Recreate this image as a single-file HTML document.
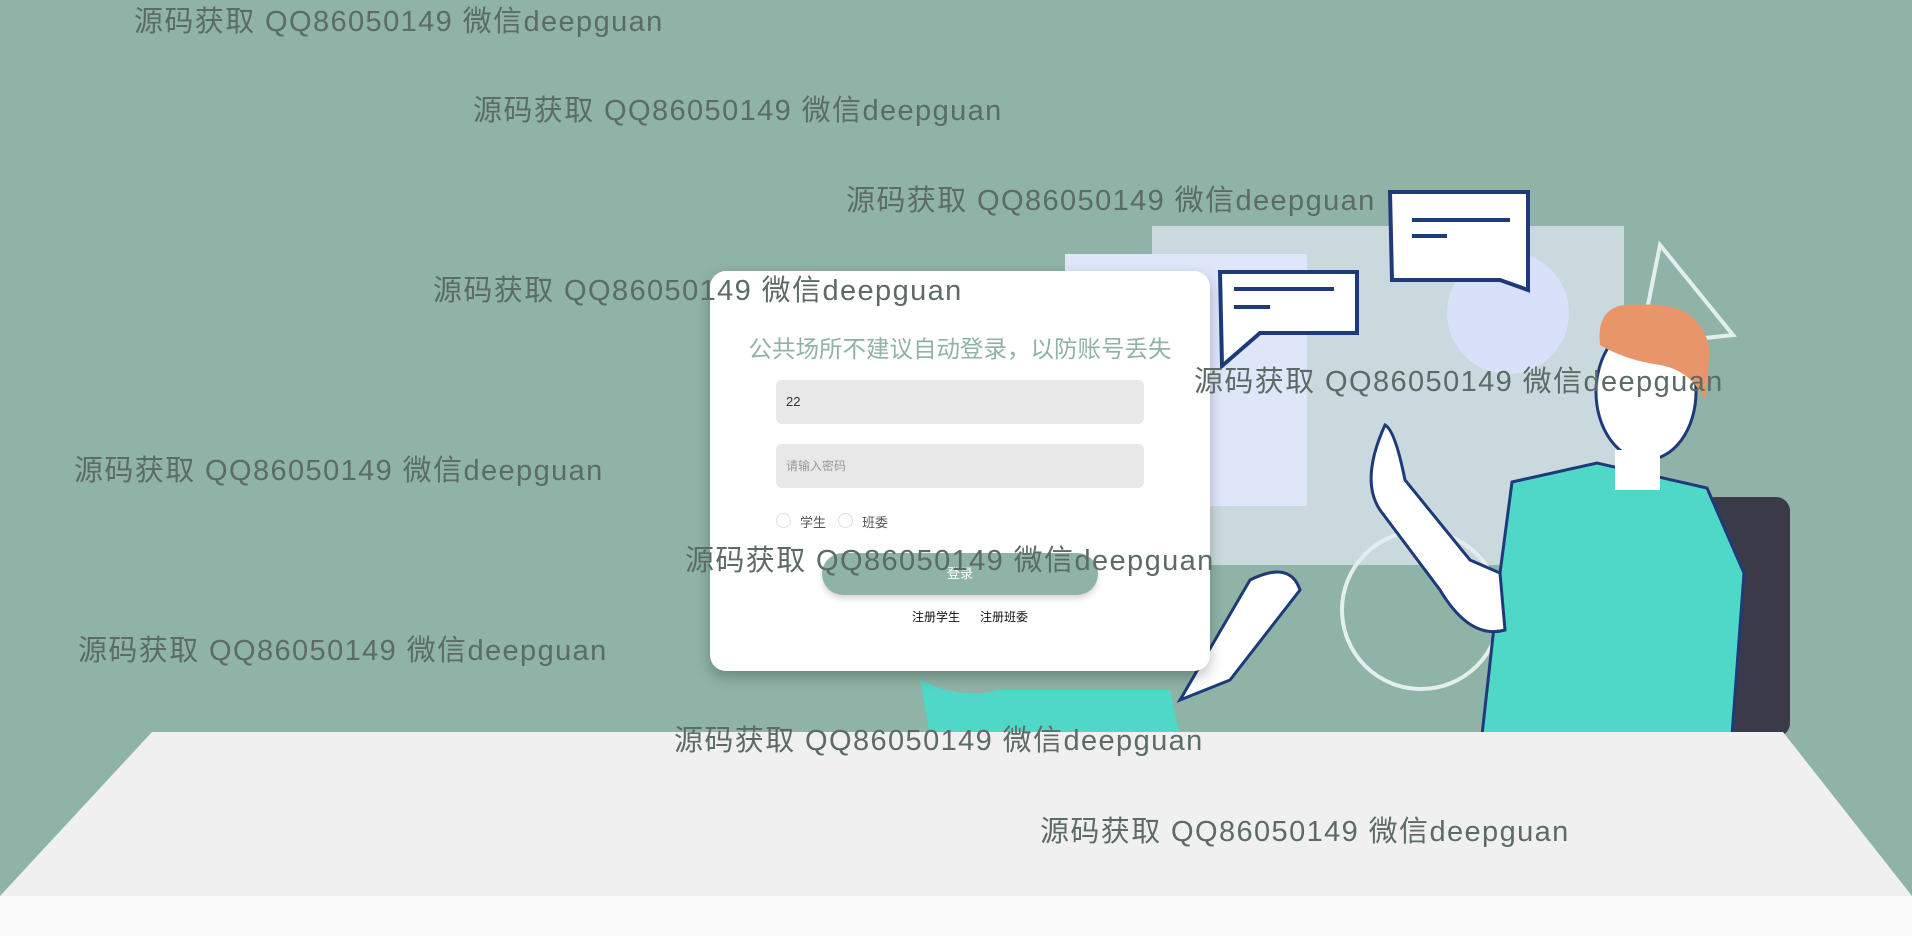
<!DOCTYPE html>
<html><head><meta charset="utf-8"><style>
html,body{margin:0;padding:0}
body{width:1912px;height:936px;overflow:hidden;position:relative;background:#8fb3a6;font-family:"Liberation Sans","Noto Sans CJK SC",sans-serif}
.wm{position:absolute;font-size:29px;letter-spacing:1.4px;color:#5c6b66;white-space:nowrap;line-height:34px;z-index:5}
.card{position:absolute;left:710px;top:271px;width:500px;height:400px;background:#fff;border-radius:16px;box-shadow:0 6px 14px rgba(0,0,0,.25);z-index:3}
.title{position:absolute;left:0;width:500px;text-align:center;font-size:23.5px;color:#8fb3a6;white-space:nowrap}
.inp{position:absolute;left:66px;width:368px;height:44px;background:#e8e8e8;border-radius:6px;font-size:13px;line-height:44px;padding-left:10px;box-sizing:border-box}
.r{position:absolute;width:13px;height:13px;border:1px solid #ddd;border-radius:50%;top:242px}
.rl{position:absolute;top:241px;font-size:13px;color:#555}
.btn{position:absolute;left:112px;top:282px;width:276px;height:42px;background:#8fb3a6;border-radius:21px;color:#fff;text-align:center;line-height:42px;font-size:13px;box-shadow:0 4px 6px rgba(0,0,0,.15)}
.lk{position:absolute;top:337px;font-size:12px;color:#111}
</style></head><body>
<svg width="1912" height="936" style="position:absolute;left:0;top:0">
<rect x="1152" y="226" width="472" height="339" fill="#c9d9dd"/>
<rect x="1065" y="254" width="242" height="252" fill="#dfe6fa"/>
<circle cx="1508" cy="313" r="61" fill="#d9e0fa"/>
<circle cx="1421" cy="610" r="79" fill="none" stroke="#e4eeee" stroke-width="4"/>
<polygon points="1660,245 1733,335 1640,345" fill="none" stroke="#e4eeee" stroke-width="4"/>
<g stroke="#1e3a7a" stroke-width="4" fill="#fff">
<path d="M1390 192 H1528 V290 L1500 280 H1392 Z"/>
<path d="M1220 272 H1357 V333 H1260 L1222 366 Z"/>
</g>
<g stroke="#1e3a7a" stroke-width="4">
<line x1="1412" y1="220" x2="1510" y2="220"/><line x1="1412" y1="236" x2="1447" y2="236"/>
<line x1="1234" y1="289" x2="1334" y2="289"/><line x1="1234" y1="307" x2="1270" y2="307"/>
</g>
<rect x="1701" y="497" width="89" height="240" rx="14" fill="#3a3a48"/>
<path d="M1512 482 L1597 463 L1707 488 L1744 573 L1732 735 L1482 735 L1500 573 Z" fill="#4fd8c8" stroke="#1e3a7a" stroke-width="3"/>
<path d="M1385 425 Q1395 430 1405 480 L1470 560 L1500 573 L1505 630 Q1470 640 1440 590 L1380 510 Q1360 480 1385 425 Z" fill="#fff" stroke="#1e3a7a" stroke-width="3"/>
<ellipse cx="1646" cy="392" rx="50" ry="68" fill="#fff" stroke="#1e3a7a" stroke-width="3"/>
<rect x="1615" y="450" width="45" height="40" fill="#fff"/>
<path d="M1600 345 Q1595 300 1640 305 Q1700 300 1710 350 L1705 400 Q1690 370 1660 365 Q1625 360 1600 345 Z" fill="#e8956a"/>
<path d="M920 680 Q960 700 1000 690 L1170 690 L1180 735 L930 735 Z" fill="#4fd8c8"/>
<path d="M1180 700 L1250 580 Q1290 560 1300 590 L1230 680 Z" fill="#fff" stroke="#1e3a7a" stroke-width="3"/>
<polygon points="152,732 1783,732 1912,896 0,896" fill="#f0f0f0"/>
<rect x="0" y="896" width="1912" height="40" fill="#f9f9f9"/>
</svg>
<div class="card">
<div class="title" style="top:59px">公共场所不建议自动登录，以防账号丢失</div>
<div class="inp" style="top:109px;color:#333">22</div>
<div class="inp" style="top:173px;color:#999;font-size:12px">请输入密码</div>
<div class="r" style="left:66px"></div><div class="rl" style="left:90px">学生</div>
<div class="r" style="left:128px"></div><div class="rl" style="left:152px">班委</div>
<div class="btn">登录</div>
<div class="lk" style="left:202px">注册学生</div><div class="lk" style="left:270px">注册班委</div>
</div>
<div class="wm" style="left:134px;top:5px">源码获取 QQ86050149 微信deepguan</div>
<div class="wm" style="left:473px;top:94px">源码获取 QQ86050149 微信deepguan</div>
<div class="wm" style="left:846px;top:184px">源码获取 QQ86050149 微信deepguan</div>
<div class="wm" style="left:433px;top:274px">源码获取 QQ86050149 微信deepguan</div>
<div class="wm" style="left:1194px;top:365px">源码获取 QQ86050149 微信deepguan</div>
<div class="wm" style="left:74px;top:454px">源码获取 QQ86050149 微信deepguan</div>
<div class="wm" style="left:685px;top:544px">源码获取 QQ86050149 微信deepguan</div>
<div class="wm" style="left:78px;top:634px">源码获取 QQ86050149 微信deepguan</div>
<div class="wm" style="left:674px;top:724px">源码获取 QQ86050149 微信deepguan</div>
<div class="wm" style="left:1040px;top:815px">源码获取 QQ86050149 微信deepguan</div>
</body></html>
